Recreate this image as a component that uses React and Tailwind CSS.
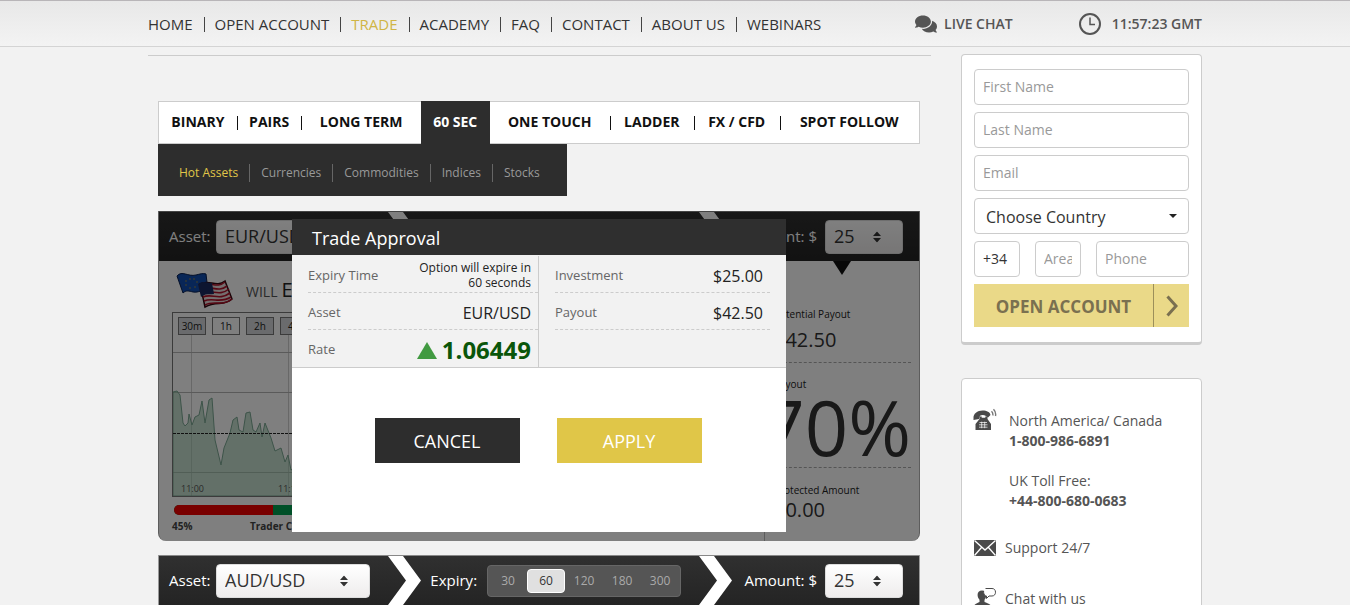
import React, { useState } from 'react';
import { FaComments } from 'react-icons/fa';

const NAV = ['Home', 'Open Account', 'Trade', 'Academy', 'FAQ', 'Contact', 'About Us', 'Webinars'];

const TABS = [
  { label: 'BINARY', pad: 'px-3', sep: true },
  { label: 'PAIRS', pad: 'px-3', sep: true },
  { label: 'LONG TERM', pad: 'px-[18px]' },
  { label: '60 SEC', pad: 'px-3' },
  { label: 'ONE TOUCH', pad: 'px-[18px]', sep: true },
  { label: 'LADDER', pad: 'px-[14px]', sep: true },
  { label: 'FX / CFD', pad: 'px-[14px]', sep: true },
  { label: 'SPOT FOLLOW', pad: 'px-5' },
];

const CATEGORIES = ['Hot Assets', 'Currencies', 'Commodities', 'Indices', 'Stocks'];
const EXPIRIES = ['30', '60', '120', '180', '300'];
const RANGES = ['30m', '1h', '2h', '4h', '1d'];

const ClockIcon = () => (
  <svg width="24" height="24" viewBox="0 0 24 24" fill="none" stroke="#555" aria-hidden="true">
    <circle cx="12" cy="12" r="10" strokeWidth="2" />
    <path d="M12 5.5V12.5H17" strokeWidth="1.5" />
  </svg>
);

const PhoneIcon = () => (
  <svg width="24" height="24" viewBox="0 0 24 24" fill="#4a4a4a" aria-hidden="true">
    <path d="M0.500 10.500C0 5.500 4.500 2.500 9.500 2.500c4.500 0 7.500 1.500 8 4.500L15 9.500 12.500 7.700C11 6.700 8.500 6.800 7 7.700L6 11 0.500 12z" />
    <path d="M6.500 8.500h2.200v1.300h3.600V8.500h2.200v2.500l3.500 5V22H2.500v-6l4-5z" />
    <path d="M6.500 14.500h7.500M6 16.800h8.500M6 19.200h8.500M8.700 13.700v6.500M11.700 13.700v6.500" stroke="#fff" strokeWidth="0.7" />
    <path d="M18.500 3.200c1.200 1.200 1.600 2.700 1.300 4.300M20.500 1.200c1.900 1.900 2.500 4.300 2 6.800" fill="none" stroke="#777" strokeWidth="1.400" />
  </svg>
);

const MailIcon = () => (
  <svg width="24" height="18" viewBox="0 0 24 18" aria-hidden="true">
    <rect x="1" y="1" width="22" height="16" fill="#4a4a4a" />
    <path d="M1.500 1.500L12 11 22.500 1.500M1.500 16.500L8.500 8.500M22.500 16.500L15.500 8.500" fill="none" stroke="#fff" strokeWidth="1.300" />
  </svg>
);

const AgentIcon = () => (
  <svg width="24" height="24" viewBox="0 0 24 24" aria-hidden="true">
    <path
      d="M9 3.500c3 0 4.500 2 4.300 4.800-.1 2-1 3.600-1.800 4.500v2.200c2.500 1 6.500 2 7.500 5.500V24H0v-3.500c.8-3.300 4.500-4.500 6.500-5.500v-2.200C5.500 11.500 4.600 10 4.600 8.300 4.400 5.500 6 3.500 9 3.500z"
      fill="#4a4a4a"
    />
    <path
      d="M12.500 1.500h6.500c2.300 0 3.500 1.600 3.500 3.700S21.300 9 19 9h-3l-2.500 2.500V9c-1.500-.2-2.800-1.300-2.800-3.600"
      fill="#fff"
      stroke="#4a4a4a"
      strokeWidth="1"
    />
  </svg>
);

const FlagsIcon = () => (
  <svg width="58" height="40" viewBox="0 0 58 40" aria-hidden="true">
    <path d="M1 6C6 0 12 7 20 5c4-1 7-2 10-1l2 17c-6-2-9 2-15 1-4-1-7-2-10 1z" fill="#104cae" stroke="#0a2050" />
    <g fill="#a08c3c">
      <circle cx="14" cy="9" r="0.8" /><circle cx="18" cy="9" r="0.8" /><circle cx="21" cy="12" r="0.8" />
      <circle cx="19" cy="17" r="0.8" /><circle cx="14" cy="18" r="0.8" /><circle cx="10" cy="15" r="0.8" /><circle cx="10" cy="11" r="0.8" />
    </g>
    <path d="M24 14c9-5 16 4 25-3l7 18c-9 8-15 1-27 8z" fill="#e8dcdc" stroke="#300810" strokeWidth="1.500" />
    <g fill="none" stroke="#b01028" strokeWidth="1.600">
      <path d="M25 15c9-4 16 4 24-3" />
      <path d="M26 19c9-4 16 4 25-3" />
      <path d="M27 23c9-4 16 4 26-4" />
      <path d="M27 27c9-4 16 4 27-4" />
      <path d="M28 31c9-4 16 3 27-4" />
      <path d="M29 35c9-5 17 2 27-6" />
    </g>
    <path d="M22 14c6-4 9-1 14-1l2 11c-5 1-8-1-13 3z" fill="#1a2a60" />
  </svg>
);

const Chevron = () => (
  <svg width="34" height="49" viewBox="0 0 34 49" aria-hidden="true" className="shrink-0">
    <path d="M0 0h15l18 24.500L15 49H0l18-24.500z" fill="#fff" />
  </svg>
);

const UpDown = () => (
  <svg
    width="8"
    height="11"
    viewBox="0 0 8 11"
    fill="#333"
    aria-hidden="true"
    className="pointer-events-none absolute right-[22px] top-1/2 -translate-y-1/2"
  >
    <path d="M4 0l4 4.500H0zM4 11l4-4.500H0z" />
  </svg>
);

const Picker = ({ id, value, width }) => (
  <span className={`relative ${width}`}>
    <select
      id={id}
      defaultValue={value}
      className="block h-[34px] w-full appearance-none rounded-sm border border-[#ddd] bg-linear-to-b from-white to-[#eeecec] px-2 pb-0.5 text-lg leading-6 text-[#333]"
    >
      <option>{value}</option>
    </select>
    <UpDown />
  </span>
);

const TradeHeader = ({ id, asset }) => {
  const [expiry, setExpiry] = useState('60');

  return (
    <div className="flex h-[50px] items-center border-t border-[#888] bg-linear-to-b from-[#303030] to-[#242424] pl-2.5 pr-4 text-[15px] text-white">
      <label htmlFor={`${id}-asset`} className="w-[47px]">Asset:</label>
      <Picker id={`${id}-asset`} value={asset} width="w-[154px]" />
      <div className="flex flex-1 justify-end pr-2"><Chevron /></div>
      <span id={`${id}-expiry`} className="mr-2.5">Expiry:</span>
      <div
        role="group"
        aria-labelledby={`${id}-expiry`}
        className="flex h-8 items-center rounded-sm border border-[#666] bg-[#555] px-px text-[12px] text-[#aaa]"
      >
        {EXPIRIES.map((e) => (
          <button
            key={e}
            type="button"
            aria-pressed={e === expiry}
            onClick={() => setExpiry(e)}
            className={`h-6 w-[38px] ${e === expiry ? 'rounded-sm border border-white bg-[#e0e0e0] text-[#333]' : ''}`}
          >
            {e}
          </button>
        ))}
      </div>
      <div className="flex flex-1 justify-end pr-[11px]"><Chevron /></div>
      <label htmlFor={`${id}-amount`} className="mr-2">Amount: $</label>
      <Picker id={`${id}-amount`} value="25" width="w-[78px]" />
    </div>
  );
};

const PriceChart = () => (
  <div className="relative mt-1 border border-[#777]">
    <svg width="100%" height="183" className="block" aria-label="EUR/USD price">
      <g stroke="#b4b4b4">
        <path d="M18.500 5V183M115.500 5V183" stroke="#d0d0d0" />
        <path d="M0 39.500H600M0 79.500H600M0 159.500H600" />
      </g>
      <path
        d="M0 79L4 78 7 82 10 110 12 113 15 110 16 101 19 112 22 104 26 102 29 88 32 110 36 87 39 85 42 127 48 152 51 135 57 120 60 107 64 104 66 117 70 119 73 100 77 99 80 117 83 119 87 110 89 124 92 110 98 125 102 138 108 135 112 149 115 142 118 157 130 150V183H0z"
        fill="#8fc4a4"
        fillOpacity="0.5"
        stroke="#7aa792"
      />
      <path d="M0 120.500H600" stroke="#222" strokeDasharray="3 1" />
      <g fill="#555" fontSize="9">
        <text x="8" y="179">11:00</text>
        <text x="105" y="179">11:15</text>
      </g>
    </svg>
    <div className="absolute left-[5px] top-1 flex gap-1.5 text-[10px] leading-4 text-[#222]">
      {RANGES.map((r) => (
        <button
          key={r}
          type="button"
          className={`h-[18px] w-7 border border-[#777] ${r === '1h' ? 'bg-white' : 'bg-[#d4d6da]'}`}
        >
          {r}
        </button>
      ))}
    </div>
  </div>
);

const DetailRow = ({ label, last, children }) => (
  <div className={`flex h-[37px] items-center justify-between pr-[7px] pt-[3px] ${last ? '' : 'border-b border-dashed border-[#ccc]'}`}>
    <dt>{label}</dt>
    <dd className="text-base text-[#222]">{children}</dd>
  </div>
);

const ApprovalDialog = () => (
  <div
    role="dialog"
    aria-labelledby="approval-title"
    className="absolute left-[134px] right-[134px] top-2 h-[313px] bg-white text-[#222]"
  >
    <h2 id="approval-title" className="h-9 bg-[#2f2f2f] pl-5 pt-px text-lg leading-9 text-white">Trade Approval</h2>
    <div className="grid grid-cols-2 border-b border-[#ccc] bg-[#f2f2f2] pt-px">
      <dl className="border-r border-[#ccc] pl-4 text-[13px] text-[#666]">
        <DetailRow label="Expiry Time">
          <span className="block pb-0.5 text-right text-[12px] leading-[15px]">Option will expire in<br />60 seconds</span>
        </DetailRow>
        <DetailRow label="Asset">EUR/USD</DetailRow>
        <DetailRow label="Rate" last>
          <span className="flex items-center gap-[5px] text-2xl font-bold text-[#0a560a]">
            <svg width="20" height="17" viewBox="0 0 20 17" aria-hidden="true">
              <path d="M10 0l10 17H0z" fill="#419a41" />
            </svg>
            1.06449
          </span>
        </DetailRow>
      </dl>
      <dl className="px-4 text-[13px] text-[#666]">
        <DetailRow label="Investment">$25.00</DetailRow>
        <DetailRow label="Payout">$42.50</DetailRow>
      </dl>
    </div>
    <div className="mt-[50px] flex justify-center gap-[37px] pr-0.5 text-lg text-white">
      <button type="button" className="h-[45px] w-[145px] bg-[#2d2d2d]">CANCEL</button>
      <button type="button" className="h-[45px] w-[145px] bg-[#e0c648]">APPLY</button>
    </div>
  </div>
);

const ActiveTrade = () => (
  <section className="relative mt-[15px]">
    <div className="overflow-hidden rounded-b-lg border-x border-[#bbb] bg-white">
      <TradeHeader id="eur" asset="EUR/USD" />
      <div className="flex h-[280px]">
        <div className="min-w-0 flex-1 pl-[13px] pr-6 pt-[9px]">
          <div className="flex h-[38px] pl-1">
            <FlagsIcon />
            <div className="flex h-8 items-baseline pl-3 text-sm leading-10 text-[#555]">
              <span>WILL</span>
              <span className="ml-1 text-xl leading-10 text-[#222]">EUR/USD</span>
            </div>
          </div>
          <PriceChart />
          <div className="ml-0.5 mt-2 flex h-2.5 overflow-hidden rounded-full bg-[#00a050]">
            <div className="w-[99px] bg-[#f20000]" />
          </div>
          <div className="mt-[3px] flex text-[10px] font-bold leading-4 text-[#444]">
            <span className="w-[78px]">45%</span>
            <span>Trader Choice</span>
          </div>
        </div>
        <div className="relative w-[155px] border-l border-[#bbb] pl-[9px] pr-2 text-[10px] text-[#222]">
          <svg width="18" height="14" viewBox="0 0 18 14" className="absolute left-[68px] top-0" aria-hidden="true">
            <path d="M0 0h18L9 14z" fill="#111" />
          </svg>
          <div className="border-b border-dashed border-[#aaa] pb-2 pt-[45px]">
            <p className="leading-4">Potential Payout</p>
            <p className="mt-1 text-xl leading-7 text-[#333]">$42.50</p>
          </div>
          <div className="border-b border-dashed border-[#aaa] pt-[13px]">
            <p className="leading-4">Payout</p>
            <p className="flex h-[75px] items-center justify-end pb-1.5 text-[76px] leading-none text-[#333]">70%</p>
          </div>
          <div className="pt-[14px]">
            <p className="leading-4">Protected Amount</p>
            <p className="text-xl leading-6 text-[#333]">$0.00</p>
          </div>
        </div>
      </div>
    </div>
    <div className="absolute inset-0 rounded-b-lg bg-black/50" />
    <ApprovalDialog />
  </section>
);

const TextField = ({ label, className = 'w-full', ...rest }) => (
  <input
    aria-label={label}
    placeholder={label}
    className={`h-9 rounded border border-[#ccc] bg-white px-2 pb-0.5 text-sm text-[#333] placeholder:text-[#999] ${className}`}
    {...rest}
  />
);

const SignupForm = () => (
  <form className="flex flex-col gap-[7px] rounded border border-b-[3px] border-[#ccc] bg-white px-3 pb-[15px] pt-[14px]">
    <TextField label="First Name" />
    <TextField label="Last Name" />
    <TextField label="Email" />
    <div className="relative">
      <select aria-label="Choose Country" className="block h-9 w-full appearance-none rounded border border-[#ccc] bg-white px-[11px] pt-0.5 text-base text-[#333]">
        <option>Choose Country</option>
      </select>
      <svg width="8" height="4" viewBox="0 0 8 4" className="pointer-events-none absolute right-3 top-4" aria-hidden="true">
        <path d="M0 0h8L4 4z" fill="#222" />
      </svg>
    </div>
    <div className="flex gap-[15px]">
      <TextField label="Code" defaultValue="+34" className="w-[46px]" />
      <TextField label="Area" className="w-[46px]" />
      <TextField label="Phone" className="min-w-0 flex-1" />
    </div>
    <button type="submit" className="flex h-[43px] items-center bg-[#ead988] text-[17px] font-bold text-[#7a7050]">
      <span className="flex-1 pt-0.5">OPEN ACCOUNT</span>
      <span className="flex h-full w-9 items-center justify-center border-l border-[#9c8f5a]">
        <svg width="12" height="22" viewBox="0 0 12 22" fill="none" stroke="#7a7050" strokeWidth="3" aria-hidden="true">
          <path d="M1.500 1.500L10 11 1.500 20.500" />
        </svg>
      </span>
    </button>
  </form>
);

const ContactCard = () => (
  <section className="mt-[33px] rounded border border-[#ccc] bg-white px-[11px] pb-10 pt-[29px] text-sm leading-5 text-[#555]">
    <div className="flex gap-3">
      <PhoneIcon />
      <div className="pt-[3px]">
        <p>North America/ Canada</p>
        <p className="font-bold">1-800-986-6891</p>
        <p className="mt-5">UK Toll Free:</p>
        <p className="font-bold">+44-800-680-0683</p>
      </div>
    </div>
    <a href="#support" className="mt-[27px] flex items-center gap-2"><MailIcon />Support 24/7</a>
    <a href="#chat" className="mt-[29px] flex items-center gap-2"><AgentIcon />Chat with us</a>
  </section>
);

export default function App() {
  const [tab, setTab] = useState('60 SEC');

  return (
    <div className="h-screen overflow-hidden bg-[#f2f2f2] font-['Open_Sans','Noto_Sans',sans-serif]">
      <header className="h-[47px] border-b border-t border-b-[#d4d4d4] border-t-[#b8b5b8] bg-linear-to-b from-[#e8e8e8] to-[#f3f3f3]">
        <div className="mx-auto flex h-full max-w-[1054px] items-center">
          <nav className="flex items-center pt-0.5 text-[15px] text-[#333]">
            {NAV.map((item, i) => (
              <React.Fragment key={item}>
                {i > 0 && <span className="ml-[11px] mr-2.5 h-[15px] w-px bg-[#444]" />}
                <a href="#nav" className={`uppercase ${item === 'Trade' ? 'text-[#d0b545]' : ''}`}>{item}</a>
              </React.Fragment>
            ))}
          </nav>
          <a href="#chat" className="ml-auto flex items-center gap-[7px] text-sm font-semibold text-[#555]">
            <FaComments size={22} />
            LIVE CHAT
          </a>
          <div className="ml-[65px] flex items-center gap-2.5 text-sm font-semibold text-[#555]">
            <ClockIcon />
            11:57:23 GMT
          </div>
        </div>
      </header>

      <div className="mx-auto flex max-w-[1054px] gap-[30px] pt-[7px]">
        <main className="min-w-0 flex-1">
          <div className="mt-px border-t border-[#ccc]" />
          <div className="pl-2.5 pr-[11px] pt-[45px]">
            <div className="flex h-[43px] border border-[#ccc] bg-white text-sm font-bold text-[#111]">
              {TABS.map((t) => (
                <button
                  key={t.label}
                  type="button"
                  onClick={() => setTab(t.label)}
                  className={`relative -mt-px h-[43px] flex-auto whitespace-nowrap pb-0.5 ${t.pad} ${tab === t.label ? 'bg-[#2d2d2d] text-white' : ''}`}
                >
                  {t.label}
                  {t.sep && <span className="absolute -right-px top-[15px] h-[14px] w-px bg-[#111]" />}
                </button>
              ))}
            </div>
            <div className="flex h-[52px] w-fit items-center bg-[#2d2d2d] pl-2.5 pr-4 pt-[5px] text-[12px] text-[#999]">
              {CATEGORIES.map((c, i) => (
                <button
                  key={c}
                  type="button"
                  className={`h-[18px] px-[11px] leading-[18px] ${i > 0 ? 'border-l border-[#666]' : 'text-[#e0c648]'}`}
                >
                  {c}
                </button>
              ))}
            </div>
            <ActiveTrade />
            <section className="mt-[14px] border-x border-[#999] bg-white">
              <TradeHeader id="aud" asset="AUD/USD" />
              <div className="h-[280px]" />
            </section>
          </div>
        </main>
        <aside className="w-[241px]">
          <SignupForm />
          <ContactCard />
        </aside>
      </div>
    </div>
  );
}
